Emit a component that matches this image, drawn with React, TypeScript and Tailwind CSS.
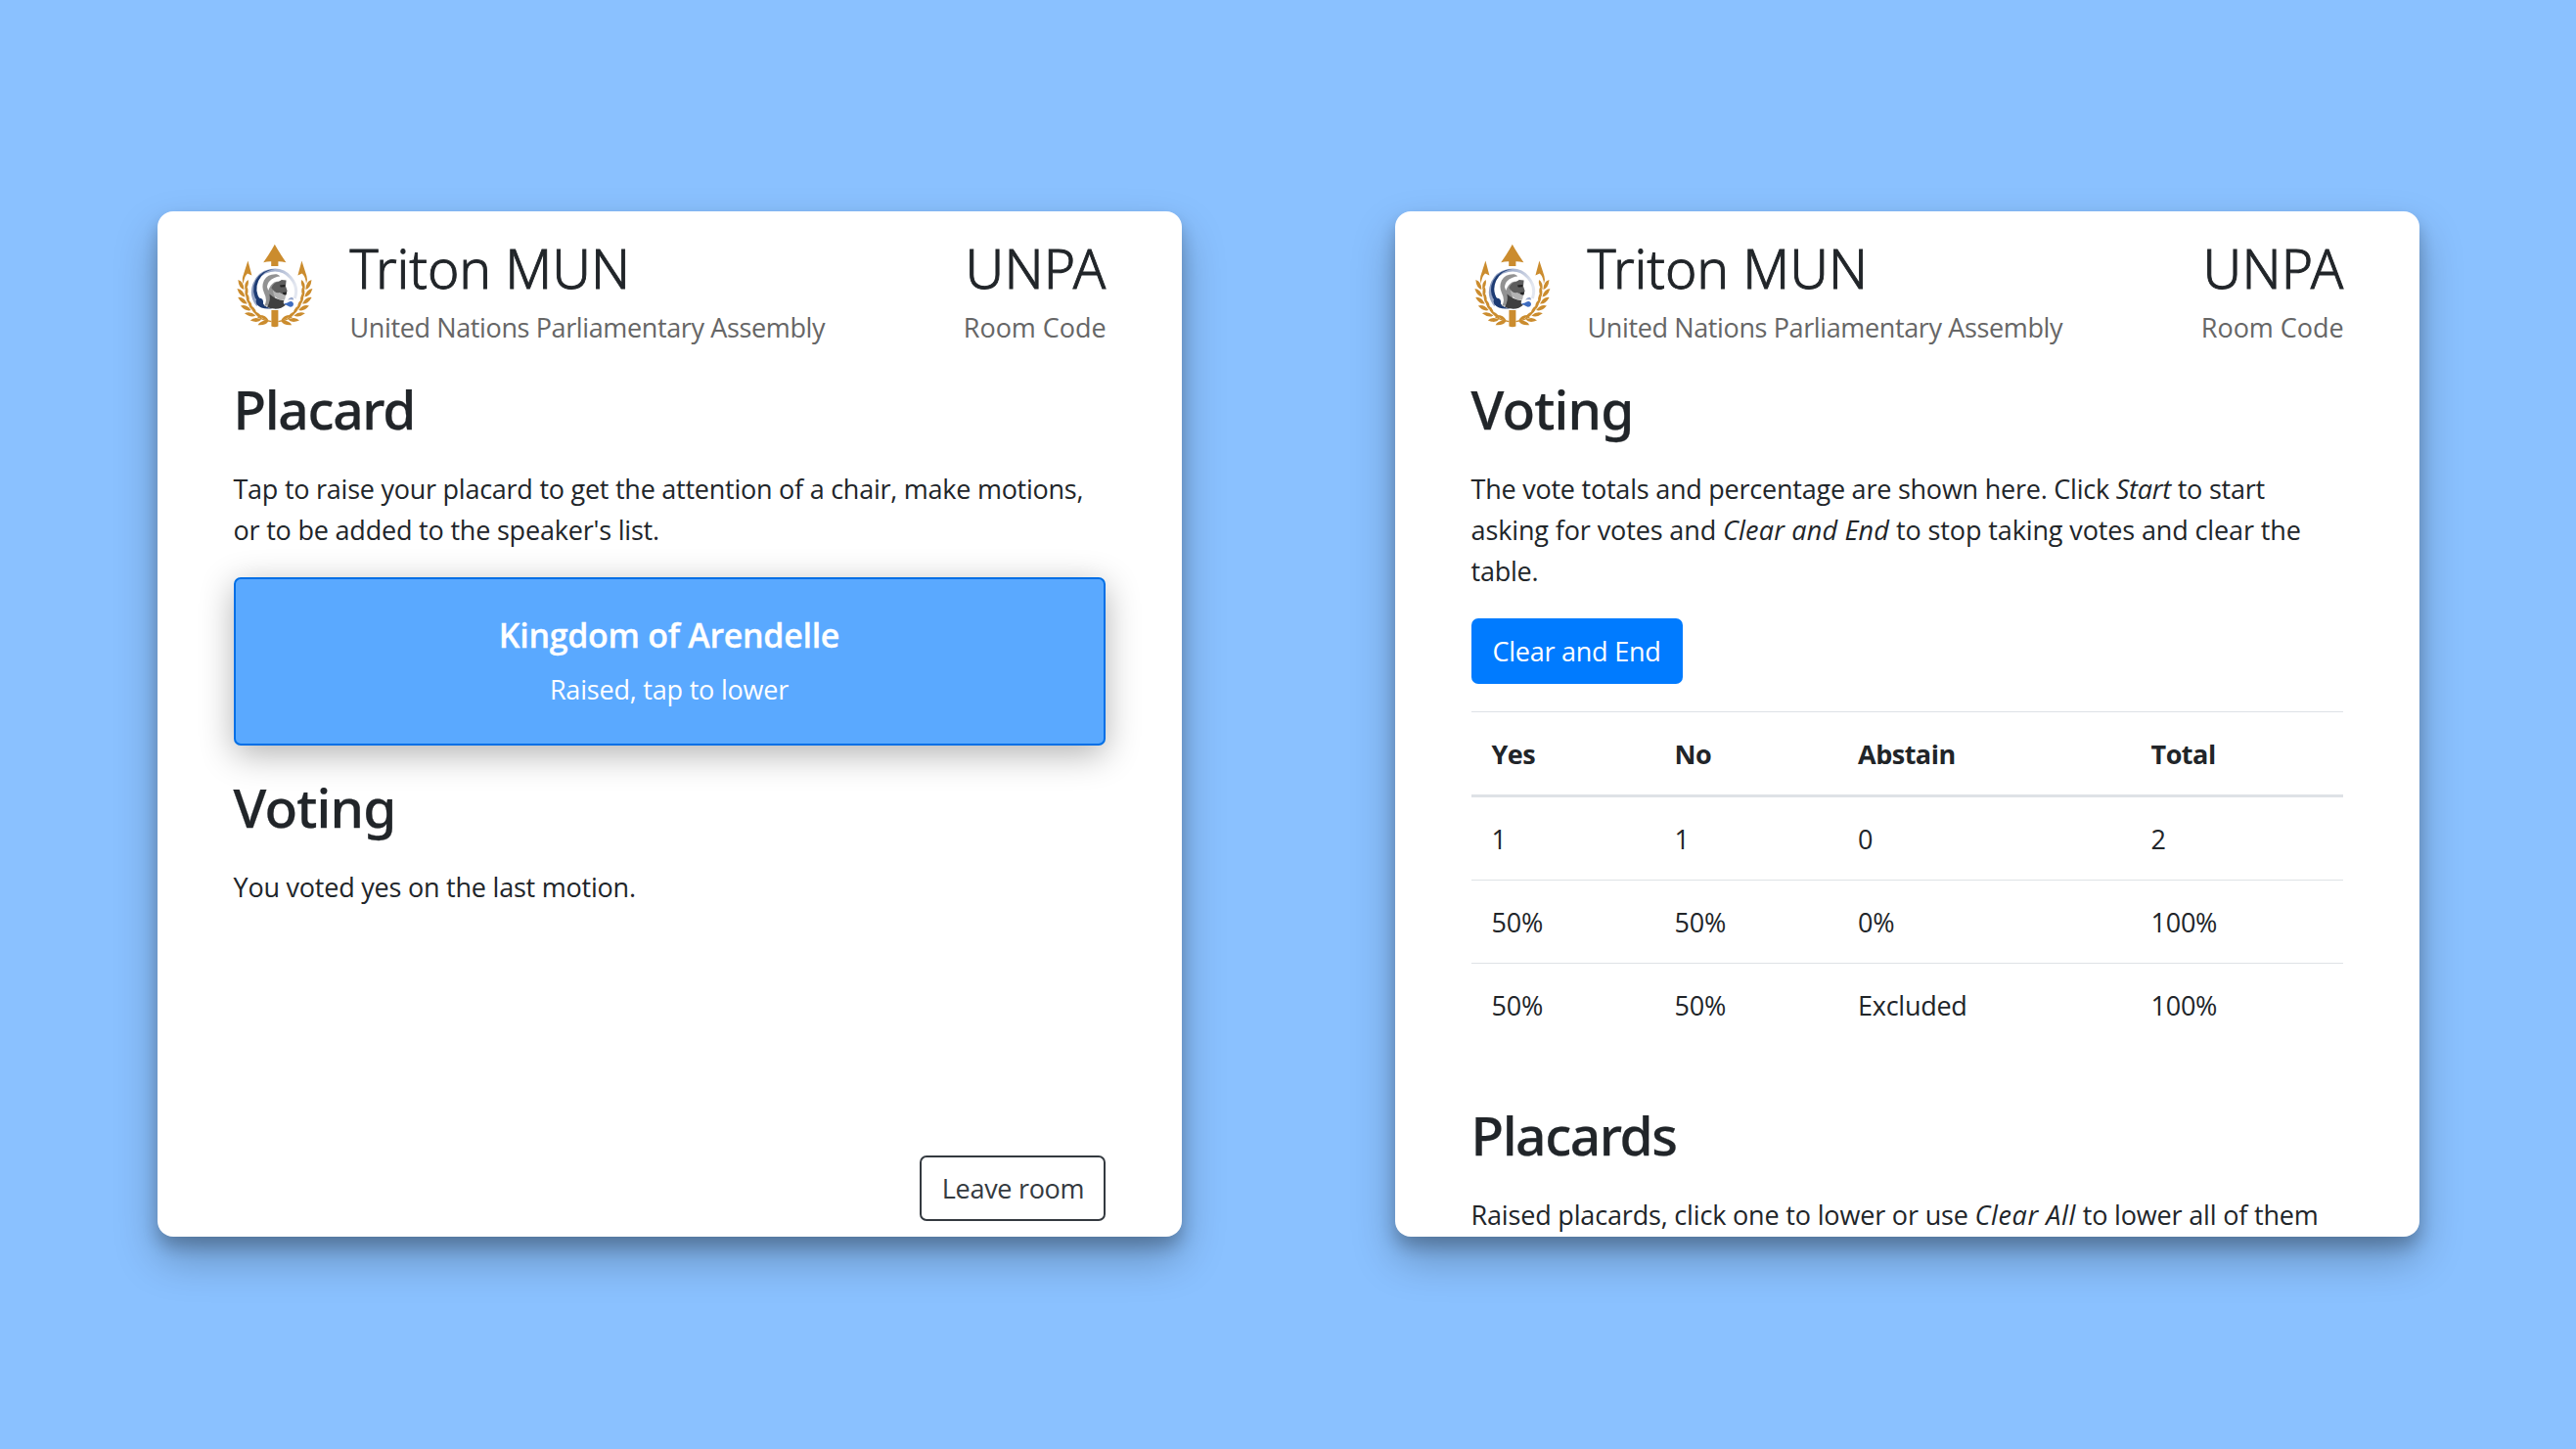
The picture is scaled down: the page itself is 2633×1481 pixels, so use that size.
import type { ReactNode } from "react";

// Leaf roots along the left branch: x, y, growth direction in degrees.
const branch: [number, number, number][] = [
  [39, 88, 184],
  [32, 86.5, 200],
  [26, 82.5, 216],
  [21.2, 77, 228],
  [17.4, 70.5, 240],
  [15, 63.5, 252],
  [14, 56, 264],
];

function Laurel() {
  return (
    <g fill="#cb8c2e">
      {branch.map(([x, y, a]) => (
        <g key={x} transform={`translate(${x} ${y}) rotate(${a})`}>
          <path d="M0 0Q2 -5.2 10.5 -5Q8 .8 0 0Z" />
          <path d="M0 .8Q3 5.8 9.4 5.4Q7.5 1 0 .8Z" />
        </g>
      ))}
      <path d="M42 88.6Q34 87.6 28 84" fill="none" stroke="#cb8c2e" strokeWidth="1.4" />
      <path d="M13 42L18 26.6L22 41.6L17.6 39.4Q14 43 13.4 50Q11.6 46 13 42Z" />
    </g>
  );
}

function Emblem() {
  return (
    <svg viewBox="3.6 0 84 100" className="h-[100px] w-[84px] shrink-0">
      <defs>
        <linearGradient id="ring" x1="0" y1="0" x2="1" y2="0.35">
          <stop offset="0" stopColor="#7f90b5" />
          <stop offset="0.5" stopColor="#a9b5cf" />
          <stop offset="1" stopColor="#e3e7f0" />
        </linearGradient>
      </defs>
      <path d="M45.4 9.8Q50 18 57 28.3Q52 27 49 27.2V32H41.8V27.2Q38 27 33.8 28.3Q41 18 45.4 9.8Z" fill="#cb8c2e" />
      <path d="M42 77H49V93.5Q45.5 95 42 93.5Z" fill="#cb8c2e" />
      <Laurel />
      <g transform="translate(91 0) scale(-1 1)">
        <Laurel />
      </g>
      <path d="M28 72A22 22 0 1 1 66 65" fill="none" stroke="url(#ring)" strokeWidth="3" />
      <path d="M45 35.2A21 21 0 0 0 28 69L31 67A20 20 0 0 1 45 35.2Z" fill="#1d3b73" />
      <path d="M27 71Q24.6 65.5 29.2 64.6Q34.4 64.8 33.6 70.6Q36.5 75 43 75.2Q32 77 27 71Z" fill="#1d3b73" />
      <path d="M34.6 73Q38.4 67 34.6 59.5Q31.5 53 34.5 46.5Q38.5 39.5 47.5 40.2L50 41.6L54 50L44 66L40 72Z" fill="#929292" />
      <path d="M37.5 53Q38.6 46.6 45 44Q51 41.4 57.4 43.6L57.4 49Q50 46.4 45 48.6Q41 51 38.8 57Z" fill="#fff" />
      <path d="M42 54Q44.5 48.6 49.4 48L52.4 46L57.2 46.6L56.6 52.4L58.2 57.2L56.8 61.4L52 62.4L45 61Z" fill="#5d5d5d" />
      <path d="M50.6 51.6L56 51L55.6 53.2L51.4 53.4ZM53.5 59L57.6 58.4L57 61.6L54 61Z" fill="#222" />
      <path d="M42.8 55Q45.4 60 50.4 59L53.6 60.4L56.6 62.6L55.6 66.6Q49 67.4 44.6 62Z" fill="#b3b3b3" />
      <path d="M37.6 73.6Q41.6 68 40 60.6Q46 66.4 55 67.2Q53 70.6 56.8 71.4Q52 76 45 75.6Q40 75.4 37.6 73.6Z" fill="#3f3f3f" />
      <path d="M54.6 70.4Q59 69.6 60.6 68.2Q64 67 64.6 70.4Q64.4 74 60.6 73.6Q58.6 72.4 54.6 70.4Z" fill="#3d6cc0" />
      <path d="M58.6 66.4Q60.6 63.8 63 63.8Q64.8 64.6 64.8 66.6Q61.8 65.8 58.6 66.4Z" fill="#97a7cc" />
    </svg>
  );
}

function Header() {
  return (
    <header className="flex items-start">
      <Emblem />
      <div className="ml-[35px]">
        <div className="font-['Noto_Sans',sans-serif] text-[55px] leading-[68px] font-light tracking-[-0.05px] [-webkit-text-stroke:0.9px_#212529]">Triton MUN</div>
        <div className="mt-[6px] tracking-[-0.375px] text-[#666]">United Nations Parliamentary Assembly</div>
      </div>
      <div className="-mr-px ml-auto text-right">
        <div className="font-['Noto_Sans',sans-serif] text-[55px] leading-[68px] font-light tracking-[0.3px] [-webkit-text-stroke:0.9px_#212529]">UNPA</div>
        <div className="mt-[6px] tracking-[-0.05px] text-[#666]">Room Code</div>
      </div>
    </header>
  );
}

function Heading({ tracking, children }: { tracking: string; children: ReactNode }) {
  return (
    <h2 className={`font-['Noto_Sans',sans-serif] text-[55px] leading-[68px] font-medium [-webkit-text-stroke:0.25px_#212529] ${tracking}`}>
      {children}
    </h2>
  );
}

function Card({ children }: { children: ReactNode }) {
  return (
    <section className="flex h-[1048px] w-[1047px] flex-col overflow-hidden rounded-[16px] bg-white px-[78px] pt-6 pb-4 shadow-[0_22px_44px_rgba(0,0,0,0.27),0_10px_16px_rgba(0,0,0,0.2)]">
      <Header />
      {children}
    </section>
  );
}

const rows = [
  ["1", "1", "0", "2"],
  ["50%", "50%", "0%", "100%"],
  ["50%", "50%", "Excluded", "100%"],
];

export default function App() {
  return (
    <main className="flex h-[1481px] justify-center gap-[218px] overflow-hidden bg-[#8ac1ff] pt-[216px] font-['Open_Sans',sans-serif] text-[27px] leading-[42px] tracking-[-0.25px] text-[#212529]">
      <Card>
        <div className="mt-7">
          <Heading tracking="tracking-[-1.3px]">Placard</Heading>
        </div>
        <p className="mt-[27px]">
          Tap to raise your placard to get the attention of a chair, make motions,
          <br />
          <span className="tracking-[-0.2px]">or to be added to the speaker's list.</span>
        </p>
        <button className="mt-[27px] block h-[172px] w-full shrink-0 rounded-[7px] border-2 border-[#006fe6] bg-[#5aa9ff] pt-0.5 text-center text-white shadow-[0_8.75px_35px_rgba(0,0,0,0.3)]">
          <span className="block text-[34px] leading-[42px] font-semibold tracking-[-0.3px] [-webkit-text-stroke:0.3px_white]">Kingdom of Arendelle</span>
          <span className="mt-[14px] block tracking-[-0.2px]">Raised, tap to lower</span>
        </button>
        <div className="mt-[29px]">
          <Heading tracking="tracking-[-0.8px]">Voting</Heading>
        </div>
        <p className="mt-[27px] tracking-[-0.22px]">You voted yes on the last motion.</p>
        <button className="mt-auto h-[67px] w-[190px] self-end rounded-[7px] border-2 border-[#343a40] pt-px pl-0.5 tracking-[-0.3px] text-[#343a40]">
          Leave room
        </button>
      </Card>

      <Card>
        <div className="mt-7">
          <Heading tracking="tracking-[-0.8px]">Voting</Heading>
        </div>
        <p className="mt-[27px] tracking-[-0.23px]">
          The vote totals and percentage are shown here. Click <em>Start</em> to start
          <br />
          <span className="tracking-[-0.12px]">
            asking for votes and <em className="tracking-[0.2px]">Clear and End</em> to stop taking votes and clear the
          </span>
          <br />
          table.
        </p>
        <button className="mt-[27px] h-[67px] w-[216px] shrink-0 self-start rounded-[7px] bg-[#007bff] pt-px text-white">
          Clear and End
        </button>
        <table className="mt-7 w-full shrink-0 table-fixed border-separate border-spacing-0 text-left">
          <colgroup>
            <col className="w-[187px]" />
            <col className="w-[187.5px]" />
            <col className="w-[299.5px]" />
            <col />
          </colgroup>
          <thead>
            <tr>
              {["Yes", "No", "Abstain", "Total"].map((h) => (
                <th key={h} className="border-t border-b-3 border-[#dee2e6] px-[21px] pt-[22px] pb-5 font-bold tracking-[-0.5px]">{h}</th>
              ))}
            </tr>
          </thead>
          <tbody>
            {rows.map((row, i) => (
              <tr key={i}>
                {row.map((cell, j) => (
                  <td key={j} className={i === 0 ? "px-[21px] pt-[22px] pb-5" : "border-t border-[#dee2e6] px-[21px] pt-[22px] pb-5"}>{cell}</td>
                ))}
              </tr>
            ))}
          </tbody>
        </table>
        <div className="mt-[57px]">
          <Heading tracking="tracking-[-1.4px]">Placards</Heading>
        </div>
        <p className="mt-[27px] tracking-[-0.17px] whitespace-nowrap">
          Raised placards, click one to lower or use <em className="tracking-[0.6px]">Clear All</em> to lower all of them
        </p>
      </Card>
    </main>
  );
}
